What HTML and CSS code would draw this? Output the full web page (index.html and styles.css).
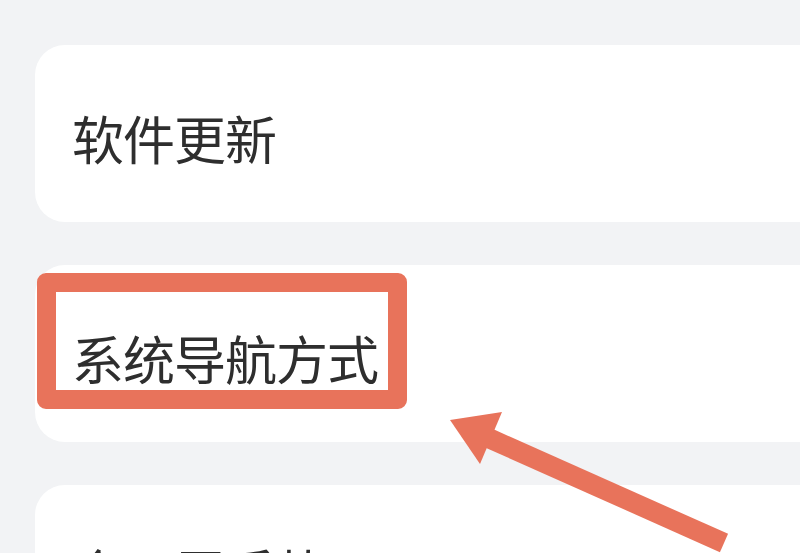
FILE: index.html
```html
<!DOCTYPE html>
<html lang="zh-CN">
<head>
  <meta charset="UTF-8" />
  <meta name="viewport" content="width=device-width, initial-scale=1.0" />
  <title>更多设置</title>
  <link rel="stylesheet" href="styles.css">
</head>
<body>
  <div class="list">
    <div class="card">
      <span class="title">软件更新</span>
    </div>

    <div class="card highlighted">
      <span class="title">系统导航方式</span>
      <div class="mark"></div>
    </div>

    <div class="card last">
      <span class="title">全面屏手势</span>
    </div>
  </div>

  <svg class="arrow" width="800" height="553" viewBox="0 0 800 553">
    <line x1="724" y1="543" x2="484" y2="436" stroke="#e8735b" stroke-width="20" />
    <polygon points="450,420 502,412 480,464" fill="#e8735b" />
  </svg>
</body>
</html>
```

FILE: styles.css
```css
html, body { margin: 0; height: 100%; overflow: hidden; }
body { background: #f2f3f5; font-family: "Noto Sans CJK SC", "Noto Sans", sans-serif; color: #2e2e2e; }
.list { padding: 45px 0 0 35px; display: flex; flex-direction: column; gap: 43px; }
.card {
  position: relative;
  background: #fff;
  height: 177px;
  width: 820px;
  border-radius: 30px;
  display: flex;
  align-items: center;
  padding: 8px 0 0 37px;
  box-sizing: border-box;
}
.card.last { padding-top: 0; align-items: flex-start; }
.card.last .title { margin-top: 61px; }
.title { font-size: 52px; line-height: 1; letter-spacing: -1px; }
.mark {
  position: absolute;
  left: 2px;
  top: 8px;
  width: 370px;
  height: 136px;
  box-sizing: border-box;
  border: 19px solid #e8735b;
  border-radius: 9px;
}
.arrow { position: absolute; left: 0; top: 0; }
```
